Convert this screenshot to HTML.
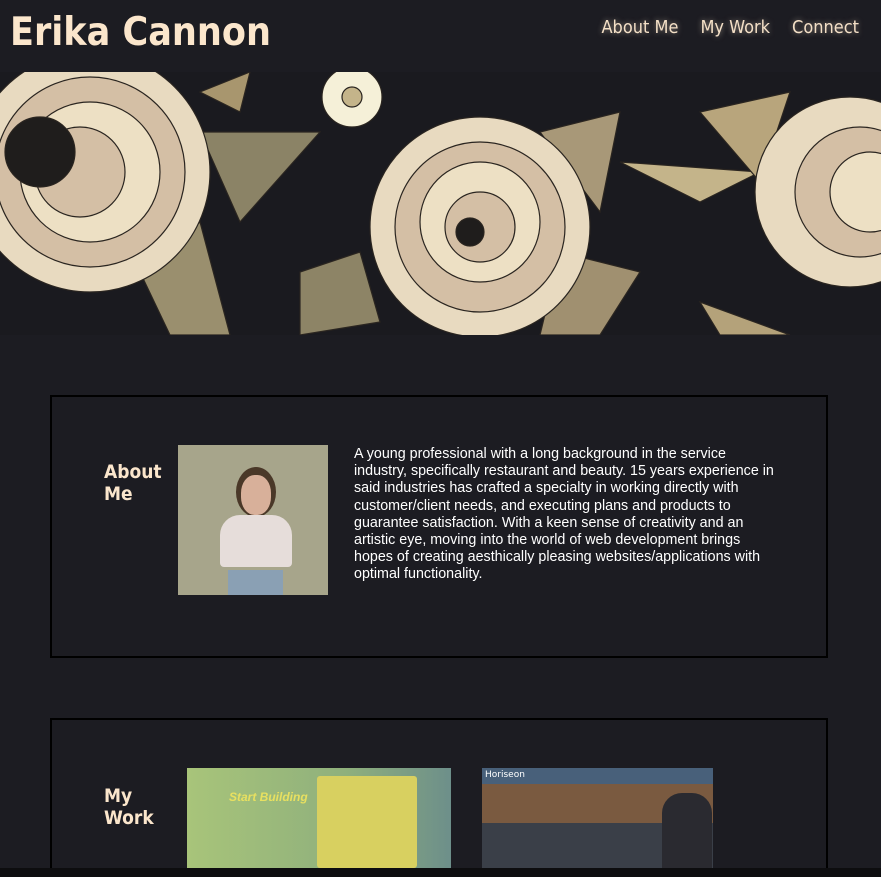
<!DOCTYPE html>
<html><head><meta charset="utf-8"><style>
*{margin:0;padding:0;box-sizing:border-box}
html,body{width:881px;height:877px;overflow:hidden}
body{background:#1c1c22;font-family:"DejaVu Sans","Liberation Sans",sans-serif;position:relative}
header{height:72px;position:relative}
h1{position:absolute;left:10px;top:10px;font-size:39px;font-weight:bold;color:#fbe6cc;font-stretch:condensed;font-family:"DejaVu Sans Condensed","DejaVu Sans",sans-serif}
nav{position:absolute;right:22px;top:17px;display:flex;gap:22px}
nav a{color:#f3dfc6;font-size:18px;text-decoration:none;text-shadow:0 0 6px #fbe6cc88;font-family:"DejaVu Sans Condensed","DejaVu Sans",sans-serif;font-stretch:condensed}
.hero{position:absolute;top:72px;left:0;width:881px;height:263px;background:#1a1a1f;overflow:hidden}
.box{position:absolute;left:50px;width:778px;border:2px solid #000;background:#1c1c22}
.h{position:absolute;color:#fbe6cc;font-weight:bold;font-size:19px;line-height:22px;font-family:"DejaVu Sans Condensed","DejaVu Sans",sans-serif;font-stretch:condensed}
p{position:absolute;left:354px;top:446px;width:428px;color:#fff;font-family:"Liberation Sans",sans-serif;font-size:14.3px;line-height:17.2px}
.bar{position:absolute;left:0;top:868px;width:881px;height:9px;background:#0d0d0f}
</style></head><body>
<header><h1>Erika Cannon</h1>
<nav><a>About Me</a><a>My Work</a><a>Connect</a></nav></header>
<div class="hero"><svg width="881" height="263" viewBox="0 0 881 263">
<g stroke="#2a2520" stroke-width="1.2">
<path d="M200 60 L320 60 L240 150 Z" fill="#8b8366"/>
<path d="M200 20 L250 0 L240 40 Z" fill="#a8966e"/>
<path d="M140 200 L200 150 L230 263 L170 263Z" fill="#9a8f6e"/>
<path d="M540 60 L620 40 L600 140 Z" fill="#a89878"/>
<path d="M620 90 L760 100 L700 130 Z" fill="#c4b48a"/>
<path d="M700 40 L790 20 L760 110 Z" fill="#b8a57c"/>
<path d="M300 200 L360 180 L380 250 L300 263Z" fill="#8d8466"/>
<path d="M560 180 L640 200 L600 263 L540 263Z" fill="#a09070"/>
<path d="M700 230 L790 263 L720 263Z" fill="#b4a27a"/>
<circle cx="90" cy="100" r="120" fill="#e8dac0"/>
<circle cx="90" cy="100" r="95" fill="#d4bfa5"/>
<circle cx="90" cy="100" r="70" fill="#ede0c4"/>
<circle cx="80" cy="100" r="45" fill="#d4bfa5"/>
<circle cx="40" cy="80" r="35" fill="#1f1d1c"/>
<circle cx="480" cy="155" r="110" fill="#e8dac0"/>
<circle cx="480" cy="155" r="85" fill="#d4bfa5"/>
<circle cx="480" cy="150" r="60" fill="#ede0c4"/>
<circle cx="480" cy="155" r="35" fill="#d4bfa5"/>
<circle cx="470" cy="160" r="14" fill="#1f1d1c"/>
<circle cx="850" cy="120" r="95" fill="#e8dac0"/>
<circle cx="860" cy="120" r="65" fill="#d4bfa5"/>
<circle cx="870" cy="120" r="40" fill="#ede0c4"/>
<circle cx="352" cy="25" r="30" fill="#f5f0d8"/>
<circle cx="352" cy="25" r="10" fill="#c4b48a"/>
</g></svg></div>
<div class="box" style="top:395px;height:263px"></div>
<div class="h" style="left:104px;top:461px">About<br>Me</div>
<div style="position:absolute;left:178px;top:445px;width:150px;height:150px;background:#a7a58b;overflow:hidden">
<div style="position:absolute;left:58px;top:22px;width:40px;height:50px;border-radius:50%;background:#4a3828"></div>
<div style="position:absolute;left:63px;top:30px;width:30px;height:40px;border-radius:45%;background:#d8b09a"></div>
<div style="position:absolute;left:42px;top:70px;width:72px;height:52px;border-radius:20px 20px 4px 4px;background:#e6ddda"></div>
<div style="position:absolute;left:50px;top:125px;width:55px;height:25px;background:#8aa0b4"></div></div>
<p>A young professional with a long background in the service industry, specifically restaurant and beauty. 15 years experience in said industries has crafted a specialty in working directly with customer/client needs, and executing plans and products to guarantee satisfaction. With a keen sense of creativity and an artistic eye, moving into the world of web development brings hopes of creating aesthically pleasing websites/applications with optimal functionality.</p>
<div class="box" style="top:718px;height:159px;border-bottom:none"></div>
<div class="h" style="left:104px;top:785px">My<br>Work</div>
<div style="position:absolute;left:187px;top:768px;width:264px;height:100px;background:linear-gradient(90deg,#a8c47a,#8fb07c 60%,#6d8f8a)">
<div style="position:absolute;left:130px;top:8px;width:100px;height:92px;background:#d8d060;border-radius:3px"></div>
<div style="position:absolute;left:42px;top:22px;color:#e8e060;font-style:italic;font-weight:bold;font-size:12px;font-family:'Liberation Sans',sans-serif">Start Building</div></div>
<div style="position:absolute;left:482px;top:768px;width:231px;height:100px;background:#7a5a40">
<div style="height:16px;background:#48607a;color:#fff;font-size:9px;padding:2px 3px">Horiseon</div>
<div style="position:absolute;left:0;top:55px;width:231px;height:45px;background:#3a3f48"></div>
<div style="position:absolute;left:180px;top:25px;width:50px;height:75px;background:#2a2a30;border-radius:20px 20px 0 0"></div></div>
<div class="bar"></div>
</body></html>
